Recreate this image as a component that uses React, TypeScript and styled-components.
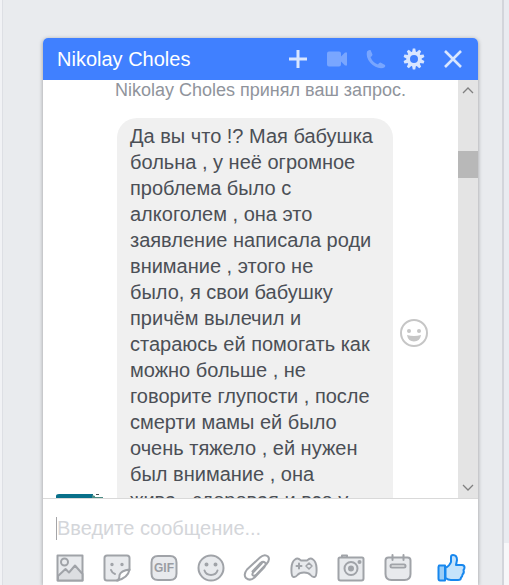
import React from "react";
import styled, { createGlobalStyle } from "styled-components";

const GlobalStyle = createGlobalStyle`
  * { box-sizing: border-box; }
  body {
    margin: 0;
    background: #e9ebee;
    font-family: "Liberation Sans", Arial, sans-serif;
  }
  button { border: 0; padding: 0; background: none; cursor: pointer; }
  svg { display: block; }
`;

const Page = styled.div`
  display: flex;
  height: 100vh;
  overflow: hidden;
`;

const LeftRail = styled.div`
  width: 3px;
  background: #f1f2f5;
  border-right: 1px solid #dddfe4;
`;

const RightRail = styled.div`
  width: 7px;
  display: flex;
  flex-direction: column;
  justify-content: flex-end;
  background: #e9ebf0;
  border-left: 2px solid #d3d5db;
`;

const RailFooter = styled.div`
  height: 42px;
  background: #f7f7f9;
`;

const Desk = styled.main`
  flex: 1;
  min-width: 0;
  display: flex;
  padding: 38px 24px 0 40px;
`;

const ChatWindow = styled.section`
  flex: 1;
  min-width: 0;
  display: flex;
  flex-direction: column;
  background: #fff;
  border-radius: 5px 5px 0 0;
  box-shadow: 0 1px 4px rgba(0, 0, 0, 0.35);
`;

const Header = styled.header`
  display: flex;
  align-items: center;
  justify-content: space-between;
  height: 42px;
  padding: 0 14px;
  background: #4080ff;
  border-radius: 5px 5px 0 0;
`;

const Title = styled.h1`
  margin: 0;
  color: #fff;
  font-size: 20px;
  line-height: 24px;
  font-weight: 400;
`;

const HeaderActions = styled.div`
  display: flex;
  justify-content: space-between;
  width: 177px;
`;

const HeaderButton = styled.button<{ $dim?: boolean }>`
  color: ${(p) => (p.$dim ? "#79a6ff" : "#d9e6ff")};
`;

const Body = styled.div`
  flex: 1;
  min-height: 0;
  display: flex;
  border-bottom: 1px solid #d9d9d9;
`;

const Messages = styled.div`
  flex: 1;
  min-width: 0;
  overflow: hidden;
`;

const Notice = styled.p`
  margin: 0 0 18px;
  padding-left: 72px;
  color: #90949c;
  font-size: 18px;
  line-height: 20px;
  white-space: nowrap;
`;

const MessageRow = styled.div`
  display: flex;
  align-items: center;
  padding-left: 13px;
`;

const Avatar = styled.div`
  align-self: flex-end;
  width: 48px;
  margin: 0 13px 6px 0;
`;

const Bubble = styled.p`
  width: 276px;
  margin: 0 6px 0 0;
  padding: 5px 0 35px 13px;
  border-radius: 20px;
  background: #f0f0f0;
  color: #4b4f56;
  font-size: 20px;
  line-height: 26px;
  white-space: pre;
`;

const ReactButton = styled.button`
  color: #c6c6c6;
`;

const Scrollbar = styled.div`
  width: 20px;
  display: flex;
  flex-direction: column;
  background: #e4e4e4;
`;

const ScrollArrow = styled.button`
  display: flex;
  align-items: center;
  justify-content: center;
  height: 20px;
  color: #808080;
`;

const ScrollTrack = styled.div`
  flex: 1;
  padding-top: 51px;
`;

const ScrollThumb = styled.div`
  height: 27px;
  background: #b8b8b8;
`;

const Composer = styled.form`
  display: flex;
  flex-direction: column;
  gap: 14px;
  padding: 18px 12px 3px 13px;
`;

const MessageInput = styled.input`
  width: 100%;
  height: 23px;
  padding: 0;
  border: 0;
  border-left: 1px solid #a5a5a8;
  outline: 0;
  background: none;
  color: #4b4f56;
  font-family: inherit;
  font-size: 20px;
  &::placeholder { color: #d4d6da; opacity: 1; }
`;

const Toolbar = styled.div`
  display: flex;
  align-items: center;
  gap: 25px;
`;

const Tools = styled.div`
  flex: 1;
  display: flex;
  justify-content: space-between;
`;

const ToolButton = styled.button`
  color: #a0a3a8;
`;

const GifText = styled.text`
  fill: #9a9da3;
  stroke: none;
  font: bold 12px "Liberation Sans", Arial, sans-serif;
`;

const messageText = `Да вы что !? Мая бабушка
больна , у неё огромное
проблема было с
алкоголем , она это
заявление написала роди
внимание , этого не
было, я свои бабушку
причём вылечил и
стараюсь ей помогать как
можно больше , не
говорите глупости , после
смерти мамы ей было
очень тяжело , ей нужен
был внимание , она
жива , здоровая и все у`;

const HeadIcon = ({ children }: { children: React.ReactNode }) => (
  <svg width="22" height="22" viewBox="0 0 22 22" fill="none" stroke="currentColor" strokeWidth="3">
    {children}
  </svg>
);

const ToolIcon = ({ children }: { children: React.ReactNode }) => (
  <svg width="28" height="28" viewBox="0 0 28 28" fill="#e8eaed" stroke="currentColor" strokeWidth="2" strokeLinejoin="round" strokeLinecap="round">
    {children}
  </svg>
);

const gearTeeth = [0, 36, 72, 108, 144, 180, 216, 252, 288, 324];

const headerItems = [
  { label: "Добавить", dim: false, art: <path d="M11 2v18M2 11h18" /> },
  {
    label: "Видеозвонок",
    dim: true,
    art: <path d="M3 3.500h10q2 0 2 2v3l4-4h2v13h-2l-4-4v3q0 2-2 2H3q-2 0-2-2v-11q0-2 2-2z" fill="currentColor" stroke="none" />,
  },
  {
    label: "Позвонить",
    dim: true,
    art: <path d="M2 3.500Q3.500 1.500 5.500 2l2 4.500q0 1.500-2 2.500 2 5.500 7.500 7.500 1-2 2.500-2l4.500 2.500q1 2-2 3Q11 21 5.500 15 .5 9.500 2 3.500z" fill="currentColor" stroke="none" />,
  },
  {
    label: "Настройки",
    dim: false,
    art: (
      <>
        <circle cx="11" cy="11" r="5.800" strokeWidth="3.600" />
        {gearTeeth.map((a) => (
          <path key={a} d="M9 4.500L9.800.5h2.400L13 4.500z" fill="currentColor" stroke="none" transform={`rotate(${a} 11 11)`} />
        ))}
      </>
    ),
  },
  { label: "Закрыть", dim: false, art: <path d="M3 3l16 16M19 3L3 19" strokeWidth="2.6" /> },
];

const toolItems = [
  {
    label: "Фото",
    art: (
      <>
        <path d="M1.500 1.500h25v25h-25z" />
        <path d="M2 22l7.500-7 3.500 3.500 6-7 7.500 8.500v6.500H2z" fill="#dcdee1" />
        <circle cx="8.500" cy="8" r="3.500" />
      </>
    ),
  },
  {
    label: "Стикер",
    art: (
      <>
        <path d="M4 1.500h20q2.500 0 2.500 2.500v12L15 26.500H4q-2.500 0-2.500-2.500V4Q1.500 1.500 4 1.500z" />
        <path d="M14 26.500q2.500-1 2.500-5.500 1.500-4.500 10-5.500-1.500 8.500-12.500 11z" fill="#fff" />
        <path d="M8 16q1 3 4 4" fill="none" />
        <circle cx="9" cy="10.500" r=".7" fill="currentColor" />
        <circle cx="19" cy="10.500" r=".7" fill="currentColor" />
      </>
    ),
  },
  {
    label: "GIF",
    art: (
      <>
        <path d="M8 2h12q6.500 0 6.500 6.500v11q0 6.500-6.500 6.500H8q-6.500 0-6.500-6.500v-11Q1.500 2 8 2z" />
        <GifText x="14" y="18" textAnchor="middle">GIF</GifText>
      </>
    ),
  },
  {
    label: "Смайлик",
    art: (
      <>
        <circle cx="14" cy="14" r="12.500" />
        <path d="M7.500 16.500q1.500 4.500 6.500 4.500t6.500-4.500" fill="none" />
        <circle cx="9.500" cy="10.500" r="1" fill="currentColor" />
        <circle cx="18.500" cy="10.500" r="1" fill="currentColor" />
      </>
    ),
  },
  {
    label: "Файл",
    art: (
      <path
        d="M19 9l-8.500 9q-2 2.500-.5 3.500 1.500 1 3.500-1l10-10.500q4-4.500 1.500-7.500-3.500-3-8 1L4 15.500q-4 5-1 8.500 4 3.500 8.500-.5l10-10.500q2-2.500.5-4.500-2-1.500-4.500.5l-8 8.500"
        fill="none"
      />
    ),
  },
  {
    label: "Игры",
    art: (
      <>
        <path d="M5 5.500q2-1.500 4-.5l2 1.500h6L19 5q2-1 4 .500 3 2 3.500 8 .5 9-2 9.500-2 .5-4-2-2-2.500-6.500-2.500T7.500 21q-2 2.500-4 2-2.500-.5-2-9.500.5-6 3.500-8z" />
        <path d="M9 9.500v5M6.500 12h5" />
        <path d="M19 9l3 3-3 3-3-3z" strokeWidth="1.500" />
      </>
    ),
  },
  {
    label: "Камера",
    art: (
      <>
        <path d="M5 3V1.500h5V3" />
        <path d="M3 3.500h22q1.500 0 1.500 1.500v19.500q0 2-2 2h-21q-2 0-2-2V5q0-1.500 1.500-1.500z" />
        <circle cx="14" cy="14.500" r="6.500" />
        <circle cx="14" cy="14.500" r="2" fill="currentColor" />
        <circle cx="22.500" cy="8" r="1" fill="currentColor" />
      </>
    ),
  },
  {
    label: "План",
    art: (
      <>
        <path d="M4.500 3.500h19q3 0 3 3V20q0 6-6 6h-13q-6 0-6-6V6.500q0-3 3-3z" />
        <path d="M8.500 1v5M19.500 1v5" />
        <path d="M8 10.500h12q1.500 0 1.500 1.500T20 13.500H8q-1.500 0-1.500-1.500T8 10.500z" fill="#fff" />
      </>
    ),
  },
];

export default function App() {
  return (
    <>
      <GlobalStyle />
      <Page>
        <LeftRail />
        <Desk>
          <ChatWindow>
            <Header>
              <Title>Nikolay Choles</Title>
              <HeaderActions>
                {headerItems.map((item) => (
                  <HeaderButton key={item.label} type="button" aria-label={item.label} $dim={item.dim}>
                    <HeadIcon>{item.art}</HeadIcon>
                  </HeaderButton>
                ))}
              </HeaderActions>
            </Header>
            <Body>
              <Messages>
                <Notice>Nikolay Choles принял ваш запрос.</Notice>
                <MessageRow>
                  <Avatar>
                    <svg width="48" height="48" viewBox="0 0 48 48">
                      <path d="M0 48V2q0-2 3-2h34v48z" fill="#08708a" />
                      <path d="M36 48V1l3 1v1h8v45z" fill="#4c8c84" />
                      <path d="M40 0h3v1h-3z" fill="#4a4f50" />
                    </svg>
                  </Avatar>
                  <Bubble>{messageText}</Bubble>
                  <ReactButton type="button" aria-label="Реакция">
                    <svg width="30" height="30" viewBox="0 0 30 30" fill="none" stroke="currentColor" strokeWidth="2">
                      <circle cx="15" cy="15" r="13" />
                      <circle cx="10" cy="13" r="2" fill="currentColor" stroke="none" />
                      <circle cx="20" cy="13" r="2" fill="currentColor" stroke="none" />
                      <path d="M8 17q7 2 14 0-1 6.500-7 6.500T8 17z" fill="currentColor" stroke="none" />
                    </svg>
                  </ReactButton>
                </MessageRow>
              </Messages>
              <Scrollbar>
                <ScrollArrow type="button" aria-label="Вверх">
                  <svg width="12" height="8" viewBox="0 0 12 8" fill="none" stroke="currentColor" strokeWidth="1.3"><path d="M1 7l5-5 5 5" /></svg>
                </ScrollArrow>
                <ScrollTrack><ScrollThumb /></ScrollTrack>
                <ScrollArrow type="button" aria-label="Вниз">
                  <svg width="12" height="8" viewBox="0 0 12 8" fill="none" stroke="currentColor" strokeWidth="1.3"><path d="M1 1l5 5 5-5" /></svg>
                </ScrollArrow>
              </Scrollbar>
            </Body>
            <Composer onSubmit={(e) => e.preventDefault()}>
              <MessageInput type="text" aria-label="Сообщение" placeholder="Введите сообщение..." />
              <Toolbar>
                <Tools>
                  {toolItems.map((item) => (
                    <ToolButton key={item.label} type="button" aria-label={item.label}>
                      <ToolIcon>{item.art}</ToolIcon>
                    </ToolButton>
                  ))}
                </Tools>
                <ToolButton type="button" aria-label="Нравится">
                  <svg width="29" height="28" viewBox="0 0 29 28" fill="#c5e3fb" stroke="#1787ee" strokeWidth="2" strokeLinejoin="round">
                    <path d="M2 11.500h6v15H3q-1.500 0-1.500-2V13z" fill="#9bcdf6" />
                    <path d="M8.500 14q4-2 5.500-6V3q0-2 2-2 4 0 4 5l-1 5h6q2.500 0 2.500 2.500 0 1.500-1 2.500 1 3-1 4.500 0 2-1.500 3 0 2.500-3 2.500h-7q-3 0-5.500-2z" />
                  </svg>
                </ToolButton>
              </Toolbar>
            </Composer>
          </ChatWindow>
        </Desk>
        <RightRail><RailFooter /></RightRail>
      </Page>
    </>
  );
}
